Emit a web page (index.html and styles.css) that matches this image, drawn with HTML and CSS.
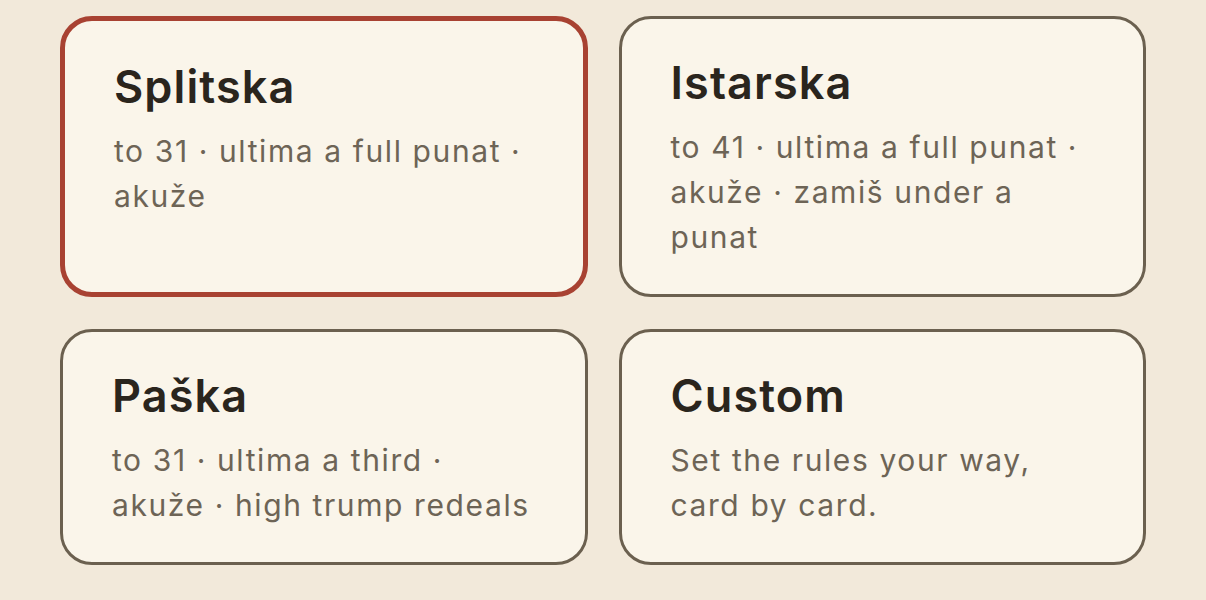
FILE: index.html
```html
<!DOCTYPE html>
<html lang="en">
<head>
<meta charset="utf-8">
<title>Rule sets</title>
<link rel="stylesheet" href="styles.css">
</head>
<body>
<main class="grid">
  <div class="card selected">
    <h2 class="title">Splitska</h2>
    <p class="desc">to 31 · ultima a full punat · akuže</p>
  </div>
  <div class="card">
    <h2 class="title">Istarska</h2>
    <p class="desc">to 41 · ultima a full punat · akuže · zamiš under a punat</p>
  </div>
  <div class="card">
    <h2 class="title">Paška</h2>
    <p class="desc">to 31 · ultima a third · akuže · high trump redeals</p>
  </div>
  <div class="card">
    <h2 class="title">Custom</h2>
    <p class="desc">Set the rules your way, card by card.</p>
  </div>
</main>
</body>
</html>
```
FILE: styles.css
```css
html, body {
  margin: 0;
  padding: 0;
  background: #f2e9da;
  font-family: Inter, "Noto Sans", sans-serif;
}
.grid {
  display: grid;
  grid-template-columns: 1fr 1fr;
  column-gap: 31px;
  row-gap: 32px;
  padding: 16px 60px;
}
.card {
  background: #faf5ea;
  border: 3px solid #6b604f;
  border-radius: 32px;
  padding: 37px 49px 34px 49px;
}
.card.selected {
  border: 5px solid #a84232;
  padding: 39px 47px 32px 49px;
}
.title {
  margin: 0 0 16px 0;
  font-size: 45px;
  line-height: 53px;
  font-weight: 600;
  letter-spacing: 1.1px;
  color: #2a251d;
}
.desc {
  margin: 0;
  font-size: 30px;
  line-height: 45px;
  font-weight: 400;
  letter-spacing: 1.6px;
  color: #6d6456;
}
```
